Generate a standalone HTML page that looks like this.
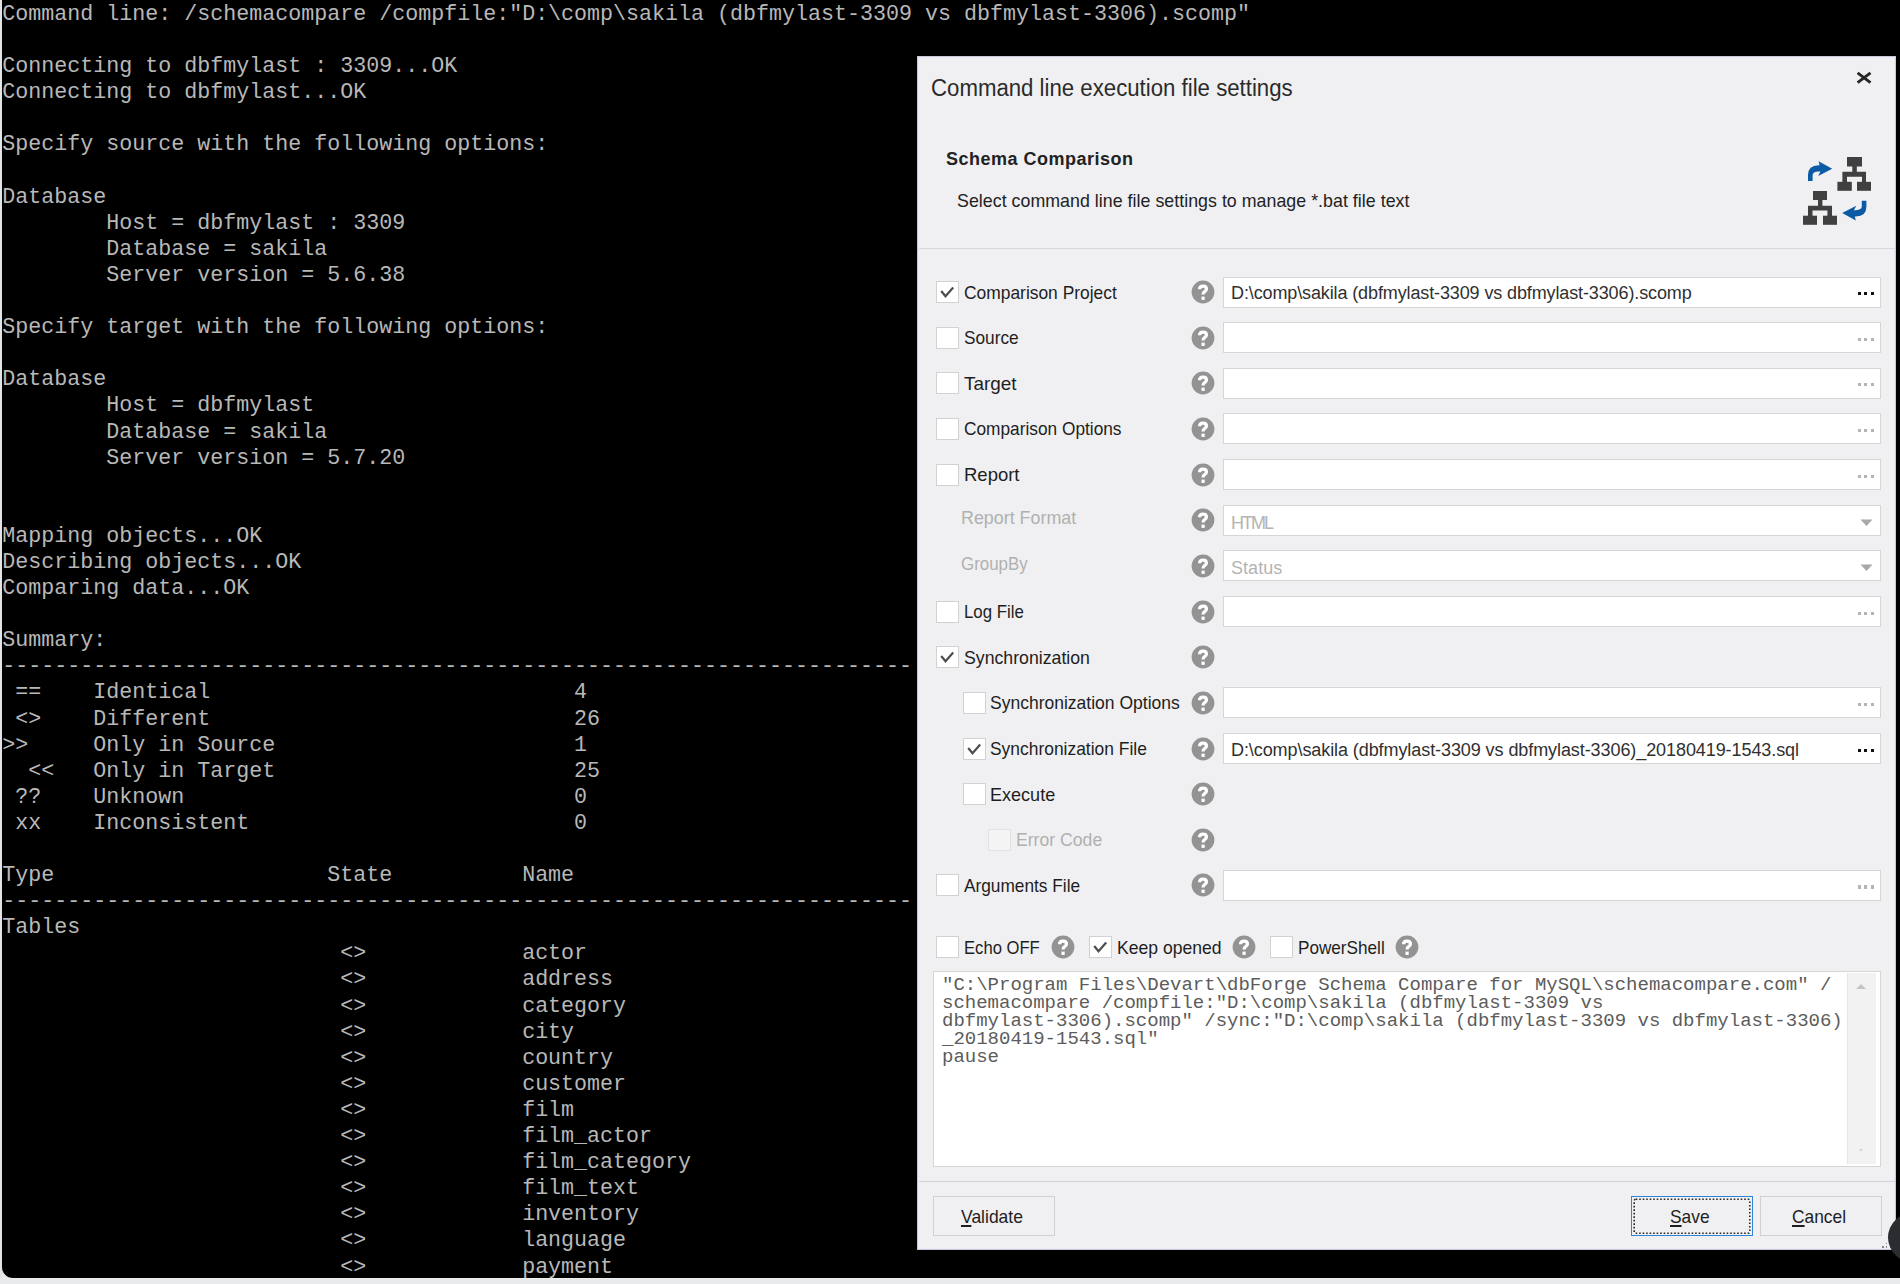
<!DOCTYPE html>
<html><head><meta charset="utf-8">
<style>
*{margin:0;padding:0;box-sizing:border-box}
html,body{width:1900px;height:1284px;overflow:hidden;background:#e9eaec;position:relative;font-family:"Liberation Sans",sans-serif}
#con{position:absolute;left:2px;top:0;width:1898px;height:1278px;background:#000;border-bottom-left-radius:11px;overflow:hidden}
#edge{position:absolute;left:0;top:0;width:2px;height:1278px;background:#e4e4e4}
#wline{position:absolute;left:0;top:1278px;width:1900px;height:1px;background:#edefed}
pre{position:absolute;font-family:"Liberation Mono",monospace;font-size:21.67px;line-height:26.09px;color:#b8b8b8;white-space:pre}
#dlg{position:absolute;left:917px;top:55.5px;width:979px;height:1194.5px;background:#f0f0f2;border:1px solid #c8c8d8;box-shadow:inset 0 0 0 1px #ebebf5}
.a{position:absolute}
.t{position:absolute;white-space:nowrap}
</style></head><body>
<div id="con"><pre style="left:0.3px;top:2px">Command line: /schemacompare /compfile:&quot;D:\comp\sakila (dbfmylast-3309 vs dbfmylast-3306).scomp&quot;

Connecting to dbfmylast : 3309...OK
Connecting to dbfmylast...OK

Specify source with the following options:

Database
        Host = dbfmylast : 3309
        Database = sakila
        Server version = 5.6.38

Specify target with the following options:

Database
        Host = dbfmylast
        Database = sakila
        Server version = 5.7.20


Mapping objects...OK
Describing objects...OK
Comparing data...OK

Summary:
----------------------------------------------------------------------
 ==    Identical                            4
 &lt;&gt;    Different                            26
&gt;&gt;     Only in Source                       1
  &lt;&lt;   Only in Target                       25
 ??    Unknown                              0
 xx    Inconsistent                         0

Type                     State          Name
----------------------------------------------------------------------
Tables
                          &lt;&gt;            actor
                          &lt;&gt;            address
                          &lt;&gt;            category
                          &lt;&gt;            city
                          &lt;&gt;            country
                          &lt;&gt;            customer
                          &lt;&gt;            film
                          &lt;&gt;            film_actor
                          &lt;&gt;            film_category
                          &lt;&gt;            film_text
                          &lt;&gt;            inventory
                          &lt;&gt;            language
                          &lt;&gt;            payment</pre></div>
<div id="edge"></div><div id="wline"></div>
<div id="dlg"></div>
<div class="a" style="left:1888px;top:1212px;width:54px;height:51px;border-radius:50%;background:#2b2c30"></div>
<div class="t" style="left:930.5px;top:76.61px;font-size:23.5px;line-height:23.5px;color:#2b2b2b;font-weight:normal;letter-spacing:0px;font-family:'Liberation Sans',sans-serif;transform:scaleX(0.945);transform-origin:0 0;">Command line execution file settings</div>
<svg class="a" style="left:1855px;top:70px" width="18" height="16" viewBox="0 0 18 16"><path d="M2.6 2.9 L15.5 12.6 M15.5 2.9 L2.6 12.6" stroke="#262626" stroke-width="2.9"/></svg>
<div class="t" style="left:946px;top:150.06px;font-size:18px;line-height:18px;color:#222;font-weight:bold;letter-spacing:0.5px;font-family:'Liberation Sans',sans-serif;">Schema Comparison</div>
<div class="t" style="left:957px;top:193.13px;font-size:17.8px;line-height:17.8px;color:#222;font-weight:normal;letter-spacing:0.03px;font-family:'Liberation Sans',sans-serif;">Select command line file settings to manage *.bat file text</div>
<svg class="a" style="left:1800px;top:150px" width="80" height="80" viewBox="0 0 80 80">
<g fill="#404040">
<rect x="47" y="7" width="15" height="9.5"/><rect x="52.3" y="16" width="4.5" height="6.5"/>
<path d="M42.4 21.8 H66 V32 H62 V26.8 H47 V32 H42.4 Z"/>
<rect x="37.4" y="31.8" width="14.4" height="9"/><rect x="57" y="31.8" width="14" height="9"/>
<rect x="13" y="41" width="14" height="9"/><rect x="18" y="50" width="4.4" height="6"/>
<path d="M8 55.8 H32 V66 H27.4 V60.5 H12.5 V66 H8 Z"/>
<rect x="3" y="65.7" width="14" height="9.1"/><rect x="23" y="65.7" width="14" height="9.1"/>
</g>
<g fill="#0b5aa6">
<path id="arr" d="M8 31 L8 25 Q8 15.4 18.6 15.2 L19.6 15.2 L18.6 11.3 L32.2 18.7 L18.2 26 L20.4 21.6 L18.6 21.6 Q12.6 21.8 12.6 25.5 L12.6 31 Z"/>
<path d="M8 31 L8 25 Q8 15.4 18.6 15.2 L19.6 15.2 L18.6 11.3 L32.2 18.7 L18.2 26 L20.4 21.6 L18.6 21.6 Q12.6 21.8 12.6 25.5 L12.6 31 Z" transform="rotate(180 37.2 40.9)"/>
</g></svg>
<div class="a" style="left:919px;top:248px;width:976px;height:1px;background:#d8d8dc"></div>
<div class="a" style="left:936px;top:281.00px;width:23px;height:22px;border:1.5px solid #d2d2d2;background:#ffffff"></div>
<svg class="a" style="left:936px;top:281.00px" width="23" height="22" viewBox="0 0 23 22"><path d="M5.2 10 L9.5 15.2 L17.2 6.6" fill="none" stroke="#4e4e4e" stroke-width="2.2" stroke-linecap="butt" stroke-linejoin="miter"/></svg>
<div class="t" style="left:963.5px;top:282.52px;font-size:19px;line-height:19px;color:#1e1e1e;font-weight:normal;letter-spacing:0px;font-family:'Liberation Sans',sans-serif;transform:scaleX(0.9157);transform-origin:0 0;">Comparison Project</div>
<svg class="a" style="left:1191.20px;top:280.00px" width="24" height="24" viewBox="0 0 24 24"><circle cx="12" cy="12" r="11.4" fill="#939393"/><path d="M8.6 9.2 Q8.6 6.1 12 6.1 Q15.4 6.1 15.4 8.9 Q15.4 10.6 13.6 11.7 Q12.1 12.6 12.1 14.6" fill="none" stroke="#fff" stroke-width="3.3"/><rect x="10.5" y="16.6" width="3.2" height="3.3" fill="#fff"/></svg>
<div class="a" style="left:1223px;top:276.50px;width:658px;height:31px;background:#fff;border:1.5px solid #d6d6d6"></div>
<div class="t" style="left:1231px;top:284.46px;font-size:18px;line-height:18px;color:#303030;font-weight:normal;letter-spacing:-0.12px;font-family:'Liberation Sans',sans-serif;">D:\comp\sakila (dbfmylast-3309 vs dbfmylast-3306).scomp</div>
<div class="a" style="left:1858.00px;top:292.00px;width:3.2px;height:3.2px;background:#111"></div>
<div class="a" style="left:1864.30px;top:292.00px;width:3.2px;height:3.2px;background:#111"></div>
<div class="a" style="left:1870.60px;top:292.00px;width:3.2px;height:3.2px;background:#111"></div>
<div class="a" style="left:936px;top:326.65px;width:23px;height:22px;border:1.5px solid #d2d2d2;background:#ffffff"></div>
<div class="t" style="left:963.5px;top:328.17px;font-size:19px;line-height:19px;color:#1e1e1e;font-weight:normal;letter-spacing:0px;font-family:'Liberation Sans',sans-serif;transform:scaleX(0.9085);transform-origin:0 0;">Source</div>
<svg class="a" style="left:1191.20px;top:325.65px" width="24" height="24" viewBox="0 0 24 24"><circle cx="12" cy="12" r="11.4" fill="#939393"/><path d="M8.6 9.2 Q8.6 6.1 12 6.1 Q15.4 6.1 15.4 8.9 Q15.4 10.6 13.6 11.7 Q12.1 12.6 12.1 14.6" fill="none" stroke="#fff" stroke-width="3.3"/><rect x="10.5" y="16.6" width="3.2" height="3.3" fill="#fff"/></svg>
<div class="a" style="left:1223px;top:322.15px;width:658px;height:31px;background:#fff;border:1.5px solid #d6d6d6"></div>
<div class="a" style="left:1858.00px;top:337.65px;width:3.2px;height:3.2px;background:#b4b4b4"></div>
<div class="a" style="left:1864.30px;top:337.65px;width:3.2px;height:3.2px;background:#b4b4b4"></div>
<div class="a" style="left:1870.60px;top:337.65px;width:3.2px;height:3.2px;background:#b4b4b4"></div>
<div class="a" style="left:936px;top:372.30px;width:23px;height:22px;border:1.5px solid #d2d2d2;background:#ffffff"></div>
<div class="t" style="left:963.5px;top:373.82px;font-size:19px;line-height:19px;color:#1e1e1e;font-weight:normal;letter-spacing:0px;font-family:'Liberation Sans',sans-serif;transform:scaleX(0.9962);transform-origin:0 0;">Target</div>
<svg class="a" style="left:1191.20px;top:371.30px" width="24" height="24" viewBox="0 0 24 24"><circle cx="12" cy="12" r="11.4" fill="#939393"/><path d="M8.6 9.2 Q8.6 6.1 12 6.1 Q15.4 6.1 15.4 8.9 Q15.4 10.6 13.6 11.7 Q12.1 12.6 12.1 14.6" fill="none" stroke="#fff" stroke-width="3.3"/><rect x="10.5" y="16.6" width="3.2" height="3.3" fill="#fff"/></svg>
<div class="a" style="left:1223px;top:367.80px;width:658px;height:31px;background:#fff;border:1.5px solid #d6d6d6"></div>
<div class="a" style="left:1858.00px;top:383.30px;width:3.2px;height:3.2px;background:#b4b4b4"></div>
<div class="a" style="left:1864.30px;top:383.30px;width:3.2px;height:3.2px;background:#b4b4b4"></div>
<div class="a" style="left:1870.60px;top:383.30px;width:3.2px;height:3.2px;background:#b4b4b4"></div>
<div class="a" style="left:936px;top:417.95px;width:23px;height:22px;border:1.5px solid #d2d2d2;background:#ffffff"></div>
<div class="t" style="left:963.5px;top:419.47px;font-size:19px;line-height:19px;color:#1e1e1e;font-weight:normal;letter-spacing:0px;font-family:'Liberation Sans',sans-serif;transform:scaleX(0.9093);transform-origin:0 0;">Comparison Options</div>
<svg class="a" style="left:1191.20px;top:416.95px" width="24" height="24" viewBox="0 0 24 24"><circle cx="12" cy="12" r="11.4" fill="#939393"/><path d="M8.6 9.2 Q8.6 6.1 12 6.1 Q15.4 6.1 15.4 8.9 Q15.4 10.6 13.6 11.7 Q12.1 12.6 12.1 14.6" fill="none" stroke="#fff" stroke-width="3.3"/><rect x="10.5" y="16.6" width="3.2" height="3.3" fill="#fff"/></svg>
<div class="a" style="left:1223px;top:413.45px;width:658px;height:31px;background:#fff;border:1.5px solid #d6d6d6"></div>
<div class="a" style="left:1858.00px;top:428.95px;width:3.2px;height:3.2px;background:#b4b4b4"></div>
<div class="a" style="left:1864.30px;top:428.95px;width:3.2px;height:3.2px;background:#b4b4b4"></div>
<div class="a" style="left:1870.60px;top:428.95px;width:3.2px;height:3.2px;background:#b4b4b4"></div>
<div class="a" style="left:936px;top:463.60px;width:23px;height:22px;border:1.5px solid #d2d2d2;background:#ffffff"></div>
<div class="t" style="left:963.5px;top:465.12px;font-size:19px;line-height:19px;color:#1e1e1e;font-weight:normal;letter-spacing:0px;font-family:'Liberation Sans',sans-serif;transform:scaleX(0.9732);transform-origin:0 0;">Report</div>
<svg class="a" style="left:1191.20px;top:462.60px" width="24" height="24" viewBox="0 0 24 24"><circle cx="12" cy="12" r="11.4" fill="#939393"/><path d="M8.6 9.2 Q8.6 6.1 12 6.1 Q15.4 6.1 15.4 8.9 Q15.4 10.6 13.6 11.7 Q12.1 12.6 12.1 14.6" fill="none" stroke="#fff" stroke-width="3.3"/><rect x="10.5" y="16.6" width="3.2" height="3.3" fill="#fff"/></svg>
<div class="a" style="left:1223px;top:459.10px;width:658px;height:31px;background:#fff;border:1.5px solid #d6d6d6"></div>
<div class="a" style="left:1858.00px;top:474.60px;width:3.2px;height:3.2px;background:#b4b4b4"></div>
<div class="a" style="left:1864.30px;top:474.60px;width:3.2px;height:3.2px;background:#b4b4b4"></div>
<div class="a" style="left:1870.60px;top:474.60px;width:3.2px;height:3.2px;background:#b4b4b4"></div>
<div class="t" style="left:960.5px;top:507.97px;font-size:19px;line-height:19px;color:#b0b0b0;font-weight:normal;letter-spacing:0px;font-family:'Liberation Sans',sans-serif;transform:scaleX(0.9402);transform-origin:0 0;">Report Format</div>
<svg class="a" style="left:1191.20px;top:508.25px" width="24" height="24" viewBox="0 0 24 24"><circle cx="12" cy="12" r="11.4" fill="#939393"/><path d="M8.6 9.2 Q8.6 6.1 12 6.1 Q15.4 6.1 15.4 8.9 Q15.4 10.6 13.6 11.7 Q12.1 12.6 12.1 14.6" fill="none" stroke="#fff" stroke-width="3.3"/><rect x="10.5" y="16.6" width="3.2" height="3.3" fill="#fff"/></svg>
<div class="a" style="left:1223px;top:504.75px;width:658px;height:31px;background:#fff;border:1.5px solid #d6d6d6"></div>
<svg class="a" style="left:1859px;top:517.75px" width="15" height="9" viewBox="0 0 15 9"><path d="M1.5 1.5 L13.5 1.5 L7.5 8 Z" fill="#a8a8a8"/></svg>
<div class="t" style="left:1231px;top:513.51px;font-size:18px;line-height:18px;color:#b4b4b4;font-weight:normal;letter-spacing:-2px;font-family:'Liberation Sans',sans-serif;">HTML</div>
<div class="t" style="left:960.5px;top:553.62px;font-size:19px;line-height:19px;color:#b0b0b0;font-weight:normal;letter-spacing:0px;font-family:'Liberation Sans',sans-serif;transform:scaleX(0.8905);transform-origin:0 0;">GroupBy</div>
<svg class="a" style="left:1191.20px;top:553.90px" width="24" height="24" viewBox="0 0 24 24"><circle cx="12" cy="12" r="11.4" fill="#939393"/><path d="M8.6 9.2 Q8.6 6.1 12 6.1 Q15.4 6.1 15.4 8.9 Q15.4 10.6 13.6 11.7 Q12.1 12.6 12.1 14.6" fill="none" stroke="#fff" stroke-width="3.3"/><rect x="10.5" y="16.6" width="3.2" height="3.3" fill="#fff"/></svg>
<div class="a" style="left:1223px;top:550.40px;width:658px;height:31px;background:#fff;border:1.5px solid #d6d6d6"></div>
<svg class="a" style="left:1859px;top:563.40px" width="15" height="9" viewBox="0 0 15 9"><path d="M1.5 1.5 L13.5 1.5 L7.5 8 Z" fill="#a8a8a8"/></svg>
<div class="t" style="left:1231px;top:559.16px;font-size:18px;line-height:18px;color:#b4b4b4;font-weight:normal;letter-spacing:0.05px;font-family:'Liberation Sans',sans-serif;">Status</div>
<div class="a" style="left:936px;top:600.55px;width:23px;height:22px;border:1.5px solid #d2d2d2;background:#ffffff"></div>
<div class="t" style="left:963.5px;top:602.07px;font-size:19px;line-height:19px;color:#1e1e1e;font-weight:normal;letter-spacing:0px;font-family:'Liberation Sans',sans-serif;transform:scaleX(0.8848);transform-origin:0 0;">Log File</div>
<svg class="a" style="left:1191.20px;top:599.55px" width="24" height="24" viewBox="0 0 24 24"><circle cx="12" cy="12" r="11.4" fill="#939393"/><path d="M8.6 9.2 Q8.6 6.1 12 6.1 Q15.4 6.1 15.4 8.9 Q15.4 10.6 13.6 11.7 Q12.1 12.6 12.1 14.6" fill="none" stroke="#fff" stroke-width="3.3"/><rect x="10.5" y="16.6" width="3.2" height="3.3" fill="#fff"/></svg>
<div class="a" style="left:1223px;top:596.05px;width:658px;height:31px;background:#fff;border:1.5px solid #d6d6d6"></div>
<div class="a" style="left:1858.00px;top:611.55px;width:3.2px;height:3.2px;background:#b4b4b4"></div>
<div class="a" style="left:1864.30px;top:611.55px;width:3.2px;height:3.2px;background:#b4b4b4"></div>
<div class="a" style="left:1870.60px;top:611.55px;width:3.2px;height:3.2px;background:#b4b4b4"></div>
<div class="a" style="left:936px;top:646.20px;width:23px;height:22px;border:1.5px solid #d2d2d2;background:#ffffff"></div>
<svg class="a" style="left:936px;top:646.20px" width="23" height="22" viewBox="0 0 23 22"><path d="M5.2 10 L9.5 15.2 L17.2 6.6" fill="none" stroke="#4e4e4e" stroke-width="2.2" stroke-linecap="butt" stroke-linejoin="miter"/></svg>
<div class="t" style="left:963.5px;top:647.72px;font-size:19px;line-height:19px;color:#1e1e1e;font-weight:normal;letter-spacing:0px;font-family:'Liberation Sans',sans-serif;transform:scaleX(0.9316);transform-origin:0 0;">Synchronization</div>
<svg class="a" style="left:1191.20px;top:645.20px" width="24" height="24" viewBox="0 0 24 24"><circle cx="12" cy="12" r="11.4" fill="#939393"/><path d="M8.6 9.2 Q8.6 6.1 12 6.1 Q15.4 6.1 15.4 8.9 Q15.4 10.6 13.6 11.7 Q12.1 12.6 12.1 14.6" fill="none" stroke="#fff" stroke-width="3.3"/><rect x="10.5" y="16.6" width="3.2" height="3.3" fill="#fff"/></svg>
<div class="a" style="left:962.5px;top:691.85px;width:23px;height:22px;border:1.5px solid #d2d2d2;background:#ffffff"></div>
<div class="t" style="left:989.5px;top:693.37px;font-size:19px;line-height:19px;color:#1e1e1e;font-weight:normal;letter-spacing:0px;font-family:'Liberation Sans',sans-serif;transform:scaleX(0.9215);transform-origin:0 0;">Synchronization Options</div>
<svg class="a" style="left:1191.20px;top:690.85px" width="24" height="24" viewBox="0 0 24 24"><circle cx="12" cy="12" r="11.4" fill="#939393"/><path d="M8.6 9.2 Q8.6 6.1 12 6.1 Q15.4 6.1 15.4 8.9 Q15.4 10.6 13.6 11.7 Q12.1 12.6 12.1 14.6" fill="none" stroke="#fff" stroke-width="3.3"/><rect x="10.5" y="16.6" width="3.2" height="3.3" fill="#fff"/></svg>
<div class="a" style="left:1223px;top:687.35px;width:658px;height:31px;background:#fff;border:1.5px solid #d6d6d6"></div>
<div class="a" style="left:1858.00px;top:702.85px;width:3.2px;height:3.2px;background:#b4b4b4"></div>
<div class="a" style="left:1864.30px;top:702.85px;width:3.2px;height:3.2px;background:#b4b4b4"></div>
<div class="a" style="left:1870.60px;top:702.85px;width:3.2px;height:3.2px;background:#b4b4b4"></div>
<div class="a" style="left:962.5px;top:737.50px;width:23px;height:22px;border:1.5px solid #d2d2d2;background:#ffffff"></div>
<svg class="a" style="left:962.5px;top:737.50px" width="23" height="22" viewBox="0 0 23 22"><path d="M5.2 10 L9.5 15.2 L17.2 6.6" fill="none" stroke="#4e4e4e" stroke-width="2.2" stroke-linecap="butt" stroke-linejoin="miter"/></svg>
<div class="t" style="left:989.5px;top:739.02px;font-size:19px;line-height:19px;color:#1e1e1e;font-weight:normal;letter-spacing:0px;font-family:'Liberation Sans',sans-serif;transform:scaleX(0.9166);transform-origin:0 0;">Synchronization File</div>
<svg class="a" style="left:1191.20px;top:736.50px" width="24" height="24" viewBox="0 0 24 24"><circle cx="12" cy="12" r="11.4" fill="#939393"/><path d="M8.6 9.2 Q8.6 6.1 12 6.1 Q15.4 6.1 15.4 8.9 Q15.4 10.6 13.6 11.7 Q12.1 12.6 12.1 14.6" fill="none" stroke="#fff" stroke-width="3.3"/><rect x="10.5" y="16.6" width="3.2" height="3.3" fill="#fff"/></svg>
<div class="a" style="left:1223px;top:733.00px;width:658px;height:31px;background:#fff;border:1.5px solid #d6d6d6"></div>
<div class="t" style="left:1231px;top:740.96px;font-size:18px;line-height:18px;color:#303030;font-weight:normal;letter-spacing:-0.08px;font-family:'Liberation Sans',sans-serif;">D:\comp\sakila (dbfmylast-3309 vs dbfmylast-3306)_20180419-1543.sql</div>
<div class="a" style="left:1858.00px;top:748.50px;width:3.2px;height:3.2px;background:#111"></div>
<div class="a" style="left:1864.30px;top:748.50px;width:3.2px;height:3.2px;background:#111"></div>
<div class="a" style="left:1870.60px;top:748.50px;width:3.2px;height:3.2px;background:#111"></div>
<div class="a" style="left:962.5px;top:783.15px;width:23px;height:22px;border:1.5px solid #d2d2d2;background:#ffffff"></div>
<div class="t" style="left:989.5px;top:784.67px;font-size:19px;line-height:19px;color:#1e1e1e;font-weight:normal;letter-spacing:0px;font-family:'Liberation Sans',sans-serif;transform:scaleX(0.9493);transform-origin:0 0;">Execute</div>
<svg class="a" style="left:1191.20px;top:782.15px" width="24" height="24" viewBox="0 0 24 24"><circle cx="12" cy="12" r="11.4" fill="#939393"/><path d="M8.6 9.2 Q8.6 6.1 12 6.1 Q15.4 6.1 15.4 8.9 Q15.4 10.6 13.6 11.7 Q12.1 12.6 12.1 14.6" fill="none" stroke="#fff" stroke-width="3.3"/><rect x="10.5" y="16.6" width="3.2" height="3.3" fill="#fff"/></svg>
<div class="a" style="left:988px;top:828.80px;width:23px;height:22px;border:1.5px solid #e2e2e2;background:#f4f4f4"></div>
<div class="t" style="left:1015.5px;top:830.32px;font-size:19px;line-height:19px;color:#b0b0b0;font-weight:normal;letter-spacing:0px;font-family:'Liberation Sans',sans-serif;transform:scaleX(0.9275);transform-origin:0 0;">Error Code</div>
<svg class="a" style="left:1191.20px;top:827.80px" width="24" height="24" viewBox="0 0 24 24"><circle cx="12" cy="12" r="11.4" fill="#939393"/><path d="M8.6 9.2 Q8.6 6.1 12 6.1 Q15.4 6.1 15.4 8.9 Q15.4 10.6 13.6 11.7 Q12.1 12.6 12.1 14.6" fill="none" stroke="#fff" stroke-width="3.3"/><rect x="10.5" y="16.6" width="3.2" height="3.3" fill="#fff"/></svg>
<div class="a" style="left:936px;top:874.45px;width:23px;height:22px;border:1.5px solid #d2d2d2;background:#ffffff"></div>
<div class="t" style="left:963.5px;top:875.97px;font-size:19px;line-height:19px;color:#1e1e1e;font-weight:normal;letter-spacing:0px;font-family:'Liberation Sans',sans-serif;transform:scaleX(0.9087);transform-origin:0 0;">Arguments File</div>
<svg class="a" style="left:1191.20px;top:873.45px" width="24" height="24" viewBox="0 0 24 24"><circle cx="12" cy="12" r="11.4" fill="#939393"/><path d="M8.6 9.2 Q8.6 6.1 12 6.1 Q15.4 6.1 15.4 8.9 Q15.4 10.6 13.6 11.7 Q12.1 12.6 12.1 14.6" fill="none" stroke="#fff" stroke-width="3.3"/><rect x="10.5" y="16.6" width="3.2" height="3.3" fill="#fff"/></svg>
<div class="a" style="left:1223px;top:869.95px;width:658px;height:31px;background:#fff;border:1.5px solid #d6d6d6"></div>
<div class="a" style="left:1858.00px;top:885.45px;width:3.2px;height:3.2px;background:#b4b4b4"></div>
<div class="a" style="left:1864.30px;top:885.45px;width:3.2px;height:3.2px;background:#b4b4b4"></div>
<div class="a" style="left:1870.60px;top:885.45px;width:3.2px;height:3.2px;background:#b4b4b4"></div>
<div class="a" style="left:936px;top:936.00px;width:23px;height:22px;border:1.5px solid #d2d2d2;background:#ffffff"></div>
<div class="t" style="left:963.5px;top:937.52px;font-size:19px;line-height:19px;color:#1e1e1e;font-weight:normal;letter-spacing:0px;font-family:'Liberation Sans',sans-serif;transform:scaleX(0.8753);transform-origin:0 0;">Echo OFF</div>
<svg class="a" style="left:1050.50px;top:935.00px" width="24" height="24" viewBox="0 0 24 24"><circle cx="12" cy="12" r="11.4" fill="#939393"/><path d="M8.6 9.2 Q8.6 6.1 12 6.1 Q15.4 6.1 15.4 8.9 Q15.4 10.6 13.6 11.7 Q12.1 12.6 12.1 14.6" fill="none" stroke="#fff" stroke-width="3.3"/><rect x="10.5" y="16.6" width="3.2" height="3.3" fill="#fff"/></svg>
<div class="a" style="left:1089px;top:936.00px;width:23px;height:22px;border:1.5px solid #d2d2d2;background:#ffffff"></div>
<svg class="a" style="left:1089px;top:936.00px" width="23" height="22" viewBox="0 0 23 22"><path d="M5.2 10 L9.5 15.2 L17.2 6.6" fill="none" stroke="#4e4e4e" stroke-width="2.2" stroke-linecap="butt" stroke-linejoin="miter"/></svg>
<div class="t" style="left:1116.5px;top:937.52px;font-size:19px;line-height:19px;color:#1e1e1e;font-weight:normal;letter-spacing:0px;font-family:'Liberation Sans',sans-serif;transform:scaleX(0.9252);transform-origin:0 0;">Keep opened</div>
<svg class="a" style="left:1231.50px;top:935.00px" width="24" height="24" viewBox="0 0 24 24"><circle cx="12" cy="12" r="11.4" fill="#939393"/><path d="M8.6 9.2 Q8.6 6.1 12 6.1 Q15.4 6.1 15.4 8.9 Q15.4 10.6 13.6 11.7 Q12.1 12.6 12.1 14.6" fill="none" stroke="#fff" stroke-width="3.3"/><rect x="10.5" y="16.6" width="3.2" height="3.3" fill="#fff"/></svg>
<div class="a" style="left:1270px;top:936.00px;width:23px;height:22px;border:1.5px solid #d2d2d2;background:#ffffff"></div>
<div class="t" style="left:1297.5px;top:937.52px;font-size:19px;line-height:19px;color:#1e1e1e;font-weight:normal;letter-spacing:0px;font-family:'Liberation Sans',sans-serif;transform:scaleX(0.9021);transform-origin:0 0;">PowerShell</div>
<svg class="a" style="left:1394.50px;top:935.00px" width="24" height="24" viewBox="0 0 24 24"><circle cx="12" cy="12" r="11.4" fill="#939393"/><path d="M8.6 9.2 Q8.6 6.1 12 6.1 Q15.4 6.1 15.4 8.9 Q15.4 10.6 13.6 11.7 Q12.1 12.6 12.1 14.6" fill="none" stroke="#fff" stroke-width="3.3"/><rect x="10.5" y="16.6" width="3.2" height="3.3" fill="#fff"/></svg>
<div class="a" style="left:932.5px;top:971px;width:948px;height:196px;background:#fff;border:1.5px solid #d6d6d6"></div>
<pre class="a" style="left:942px;top:976px;font-family:'Liberation Mono',monospace;font-size:19px;line-height:18px;color:#5c5c5c">&quot;C:\Program Files\Devart\dbForge Schema Compare for MySQL\schemacompare.com&quot; /
schemacompare /compfile:&quot;D:\comp\sakila (dbfmylast-3309 vs
dbfmylast-3306).scomp&quot; /sync:&quot;D:\comp\sakila (dbfmylast-3309 vs dbfmylast-3306)
_20180419-1543.sql&quot;
pause</pre>
<div class="a" style="left:1847px;top:973px;width:29px;height:191px;background:#f2f2f2;border-left:1px solid #e6e6e6"></div>
<svg class="a" style="left:1854px;top:982px" width="14" height="9" viewBox="0 0 14 9"><path d="M2 7 L12 7 L7 2 Z" fill="#c4c4c4"/></svg>
<svg class="a" style="left:1854px;top:1146px" width="14" height="9" viewBox="0 0 14 9"><path d="M5 3 L9 3 L7 5.5 Z" fill="#d0d0d0"/></svg>
<div class="a" style="left:919px;top:1181px;width:976px;height:1px;background:#d4d4d8"></div>
<div class="a" style="left:932.5px;top:1195.5px;width:122px;height:40.5px;border:1.5px solid #d0d0d4;background:#f0f0f2"></div>
<div class="t" style="left:960.5px;top:1206.52px;font-size:19px;line-height:19px;color:#1e1e1e;font-weight:normal;letter-spacing:0px;font-family:'Liberation Sans',sans-serif;transform:scaleX(0.921);transform-origin:0 0;"><u style="text-decoration-thickness:2px;text-underline-offset:2px">V</u>alidate</div>
<div class="a" style="left:1630.5px;top:1195.5px;width:122px;height:40.5px;border:1.5px solid #2a86d8;background:#f0f0f2"></div>
<svg class="a" style="left:1630.5px;top:1195.5px" width="122" height="40.5"><rect x="3.2" y="3.2" width="115.6" height="34.1" rx="1.5" fill="none" stroke="#2a2a2a" stroke-width="1.6" stroke-dasharray="1.6 1.9"/></svg>
<div class="t" style="left:1670.0px;top:1206.52px;font-size:19px;line-height:19px;color:#1e1e1e;font-weight:normal;letter-spacing:0px;font-family:'Liberation Sans',sans-serif;transform:scaleX(0.914);transform-origin:0 0;"><u style="text-decoration-thickness:2px;text-underline-offset:2px">S</u>ave</div>
<div class="a" style="left:1759.5px;top:1195.5px;width:122px;height:40.5px;border:1.5px solid #d0d0d4;background:#f0f0f2"></div>
<div class="t" style="left:1791.5px;top:1206.52px;font-size:19px;line-height:19px;color:#1e1e1e;font-weight:normal;letter-spacing:0px;font-family:'Liberation Sans',sans-serif;transform:scaleX(0.914);transform-origin:0 0;"><u style="text-decoration-thickness:2px;text-underline-offset:2px">C</u>ancel</div>
<div class="a" style="left:1885.5px;top:1242.5px;width:1.6px;height:1.6px;background:#888"></div>
<div class="a" style="left:1882px;top:1246px;width:1.6px;height:1.6px;background:#888"></div>
<div class="a" style="left:1885.5px;top:1246px;width:1.6px;height:1.6px;background:#888"></div>
<div class="a" style="left:1881.5px;top:1246px;width:1.6px;height:1.6px;background:#888"></div>
</body></html>
